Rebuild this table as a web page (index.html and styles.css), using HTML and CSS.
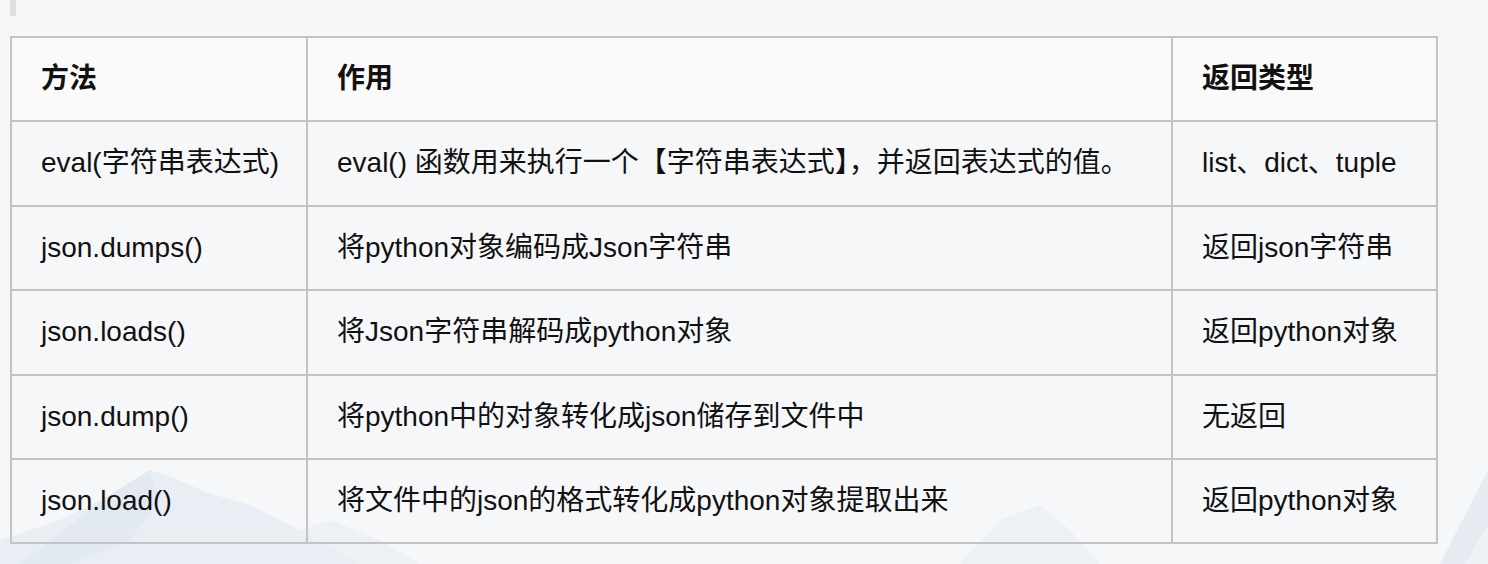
FILE: index.html
```html
<!DOCTYPE html>
<html lang="zh-CN">
<head>
<meta charset="utf-8">
<title>json 方法</title>
<link rel="stylesheet" href="styles.css">
</head>
<body>
<svg class="backdrop" width="1488" height="564" viewBox="0 0 1488 564" aria-hidden="true">
  <polygon points="0,564 0,540 60,520 110,495 150,470 175,478 205,492 250,505 300,530 360,564" fill="#e9eef5"/>
  <polygon points="110,495 150,470 160,500 130,540 70,564 20,564" fill="#e3e9f1"/>
  <polygon points="250,505 300,530 330,520 380,540 420,564 360,564" fill="#edf1f6"/>
  <polygon points="960,564 1000,520 1040,505 1070,530 1100,564" fill="#edf1f6"/>
  <polygon points="1440,564 1488,470 1488,564" fill="#e6ebf2"/>
  <polygon points="1465,564 1488,525 1488,564" fill="#eef2f7"/>
</svg>
<div class="quote-bar"></div>
<table class="api-table">
  <colgroup>
    <col class="c1">
    <col class="c2">
    <col class="c3">
  </colgroup>
  <thead>
    <tr><th>方法</th><th>作用</th><th>返回类型</th></tr>
  </thead>
  <tbody>
    <tr><td>eval(字符串表达式)</td><td>eval() 函数用来执行一个【字符串表达式】，并返回表达式的值。</td><td>list、dict、tuple</td></tr>
    <tr><td>json.dumps()</td><td>将python对象编码成Json字符串</td><td>返回json字符串</td></tr>
    <tr><td>json.loads()</td><td>将Json字符串解码成python对象</td><td>返回python对象</td></tr>
    <tr><td>json.dump()</td><td>将python中的对象转化成json储存到文件中</td><td>无返回</td></tr>
    <tr><td>json.load()</td><td>将文件中的json的格式转化成python对象提取出来</td><td>返回python对象</td></tr>
  </tbody>
</table>
</body>
</html>
```

FILE: styles.css
```css
html, body {
  margin: 0;
  padding: 0;
}
body {
  background: #f6f7f9;
  width: 1488px;
  height: 564px;
  overflow: hidden;
  position: relative;
  font-family: "Liberation Sans", "Noto Sans CJK SC", sans-serif;
  color: #111;
}
.backdrop {
  position: absolute;
  left: 0;
  top: 0;
  z-index: 0;
}
.quote-bar {
  position: relative;
  width: 6px;
  height: 16px;
  margin-left: 10px;
  background: #e1dddd;
}
.api-table {
  position: relative;
  z-index: 1;
  margin: 20px 0 0 10px;
  border-collapse: collapse;
  table-layout: fixed;
  width: 1428px;
  border: 2px solid #c3c3c3;
  font-size: 28px;
}
.c1 { width: 296px; }
.c2 { width: 865px; }
.c3 { width: 265px; }
.api-table th,
.api-table td {
  border: 2px solid #c3c3c3;
  padding: 21px 29px;
  line-height: 40.4px;
  text-align: left;
  white-space: nowrap;
}
.api-table th {
  font-weight: bold;
  background: #fafafa;
}
.api-table td {
  font-weight: normal;
}
```
